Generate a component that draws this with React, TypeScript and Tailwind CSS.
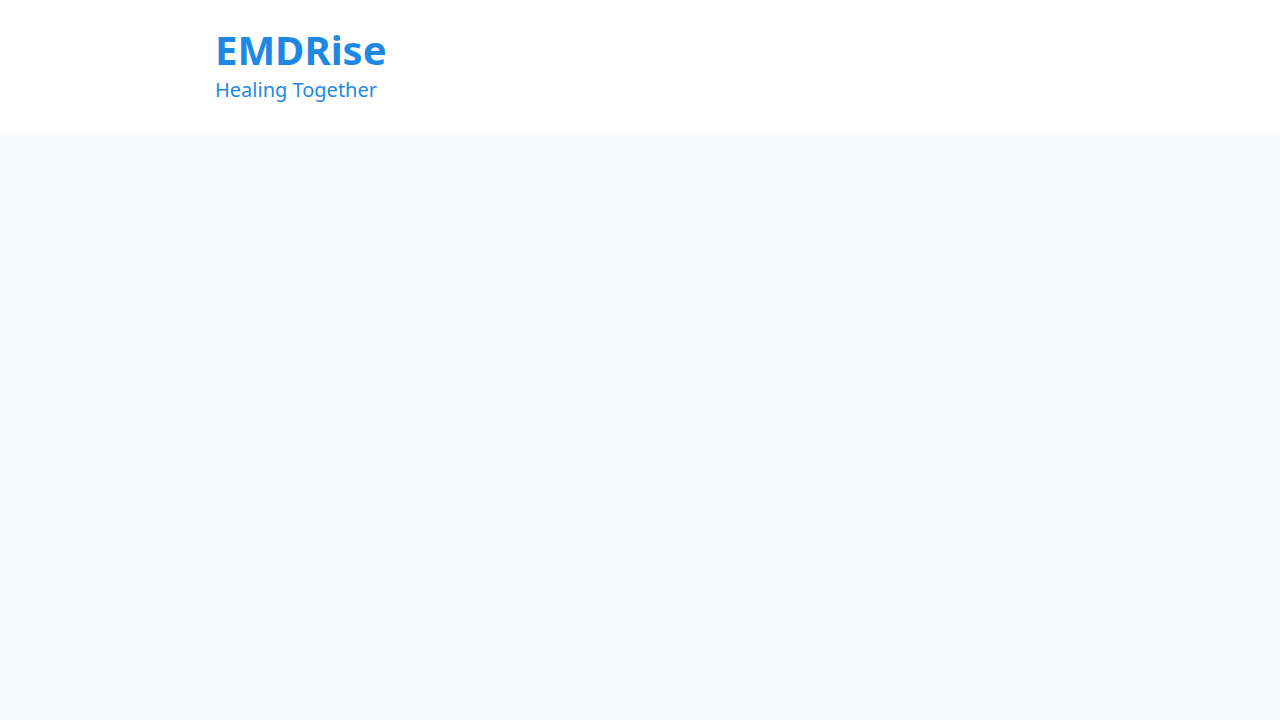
export default function App() {
  return (
    <div className="min-h-screen bg-gray-50" style={{ fontFamily: '"Noto Sans", "Open Sans", sans-serif' }}>
      <header className="bg-white h-[132px]">
        <div className="max-w-4xl mx-auto px-[23px] pt-[26px]">
          <h1 className="text-[40px] font-bold text-[#1e88e5] leading-[48px]">EMDRise</h1>
          <p className="text-xl text-[#1e88e5] leading-7 mt-[2px]">Healing Together</p>
        </div>
      </header>
      <main className="max-w-4xl mx-auto px-[23px]"></main>
    </div>
  )
}
